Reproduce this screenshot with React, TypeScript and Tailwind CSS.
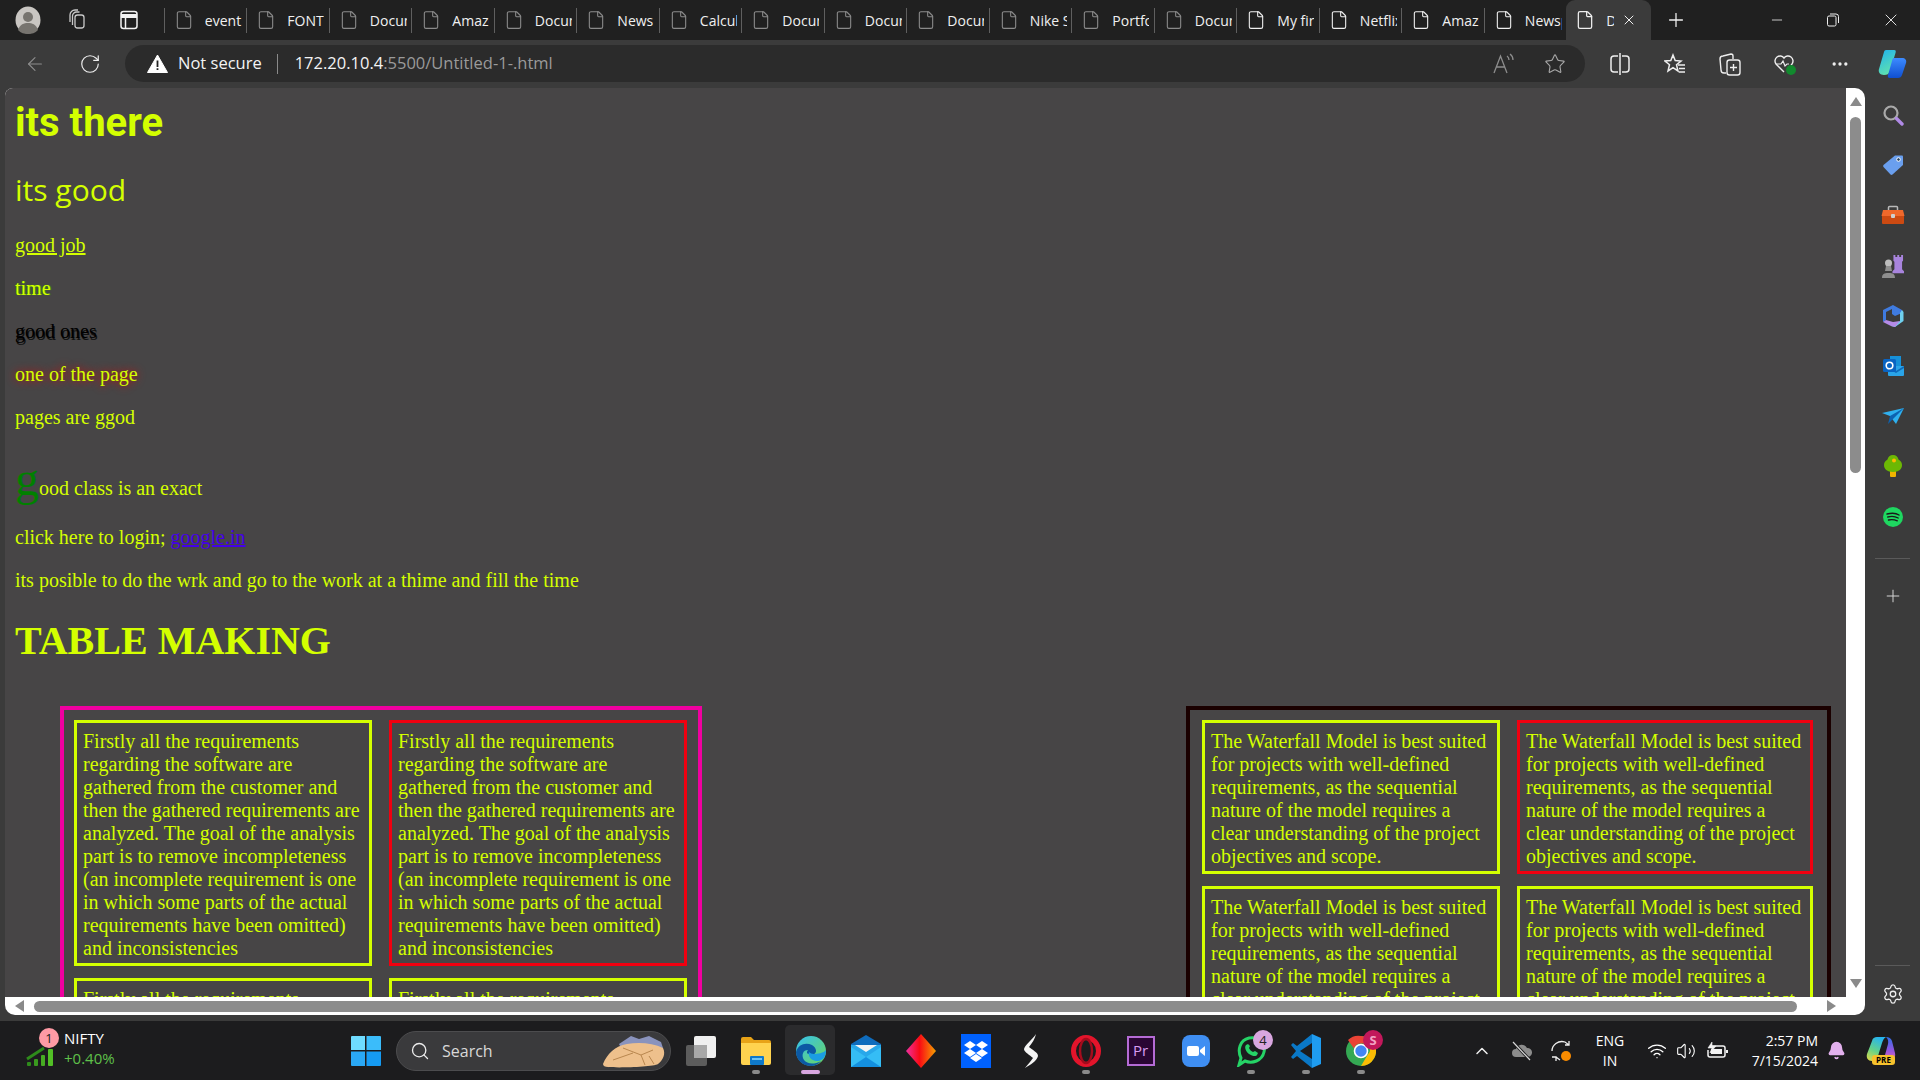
import React from 'react';
import {
  ArrowLeft,
  Bell,
  ChevronUp,
  File,
  Minus,
  MoreHorizontal,
  Plus,
  RotateCw,
  Search,
  Settings,
  Star,
  Volume2,
  Wifi,
  X,
} from 'lucide-react';

const uiFont = 'font-["Open_Sans",sans-serif]';

const tabs = [
  { title: 'event', dim: true },
  { title: 'FONT', dim: true },
  { title: 'Document', dim: true },
  { title: 'Amazon', dim: true },
  { title: 'Document', dim: true },
  { title: 'News', dim: true },
  { title: 'Calculator', dim: true },
  { title: 'Document', dim: true },
  { title: 'Document', dim: true },
  { title: 'Document', dim: true },
  { title: 'Nike Shoes', dim: true },
  { title: 'Portfolio', dim: true },
  { title: 'Document', dim: true },
  { title: 'My first page', dim: false },
  { title: 'Netflix', dim: false },
  { title: 'Amazon', dim: false },
  { title: 'Newspaper', dim: false },
];

const requirements =
  'Firstly all the requirements regarding the software are gathered from the customer and then the gathered requirements are analyzed. The goal of the analysis part is to remove incompleteness (an incomplete requirement is one in which some parts of the actual requirements have been omitted) and inconsistencies';

const waterfall =
  'The Waterfall Model is best suited for projects with well-defined requirements, as the sequential nature of the model requires a clear understanding of the project objectives and scope.';

const Avatar = () => (
  <svg width="26" height="28" viewBox="0 0 26 28">
    <ellipse cx="13" cy="14" rx="12.5" ry="13.5" fill="#c9c6c2" />
    <circle cx="13" cy="11" r="5" fill="#77746f" />
    <path d="M3 24c2-6 6-7 10-7s8 1 10 7c-3 3-6 4-10 4s-7-1-10-4z" fill="#77746f" />
  </svg>
);

const Workspaces = () => (
  <svg width="20" height="22" viewBox="0 0 20 22" fill="none" stroke="#c8c8c8" strokeWidth="1.3">
    <rect x="8" y="6" width="9" height="13" rx="2.5" />
    <path d="M5.5 16V7a4 4 0 0 1 4-4h3" />
    <path d="M3 13V6a5 5 0 0 1 5-5h3" />
  </svg>
);

const TabsIcon = () => (
  <svg width="18" height="20" viewBox="0 0 18 20" fill="none" stroke="#f2f2f2" strokeWidth="1.5">
    <rect x="1" y="1.5" width="16" height="17" rx="2.5" />
    <path d="M1 6h16" strokeWidth="4" />
    <path d="M5.5 7v11" />
  </svg>
);

const Warning = () => (
  <svg width="21" height="19" viewBox="0 0 21 19">
    <path d="M10.5 1 20.5 18.5H.5z" fill="#fff" stroke="#fff" strokeLinejoin="round" />
    <path d="M9.6 6.5h1.8v6.5H9.6zM9.6 14.2h1.8V16H9.6z" fill="#222" />
  </svg>
);

const ReadAloud = () => (
  <svg width="24" height="22" viewBox="0 0 24 22" fill="none" stroke="#8d8d8d" strokeWidth="1.3">
    <path d="M2 20 8.5 3 15 20M4.5 14h8" />
    <path d="M15 3c1.500 1 2 2.500 2 4M18 1c2 1.500 3 3.500 3 6" />
  </svg>
);

const SplitScreen = () => (
  <svg width="22" height="24" viewBox="0 0 22 24" fill="none" stroke="#eee" strokeWidth="1.5">
    <path d="M9 4H5a3 3 0 0 0-3 3v10a3 3 0 0 0 3 3h4" />
    <path d="M13 4h4a3 3 0 0 1 3 3v10a3 3 0 0 1-3 3h-4" />
    <path d="M11 1v22" />
  </svg>
);

const Favorites = () => (
  <svg width="22" height="22" viewBox="0 0 22 22" fill="none" stroke="#eee" strokeWidth="1.5">
    <path d="M9 2 11.200 7.600 17 8l-4.500 3.700L14 18l-5-3.300L4 18l1.500-6.300L1 8l5.800-.4z" />
    <path d="M14 12h7M15 15.500h6M15 19h6" />
  </svg>
);

const Collections = () => (
  <svg width="24" height="24" viewBox="0 0 24 24" fill="none" stroke="#eee" strokeWidth="1.4">
    <path d="M8 21H6a3 3 0 0 1-3-3L2 7a3 3 0 0 1 3-3l8-2a2 2 0 0 1 2 2v3" />
    <rect x="9" y="8" width="13" height="15" rx="2.5" />
    <path d="M15.500 12v7M12 15.500h7" />
  </svg>
);

const HeartPulse = () => (
  <svg width="24" height="24" viewBox="0 0 24 24" fill="none">
    <path d="M11 20 3 12a5 5 0 0 1 8-6 5 5 0 0 1 8 6l-1 1" stroke="#eee" strokeWidth="1.4" />
    <path d="M3 12h5l2-3 2 5 2-2h2" stroke="#eee" strokeWidth="1.2" />
    <circle cx="18" cy="18" r="5" fill="#128a2e" />
  </svg>
);

const CopilotMark = ({ size = 30 }: { size?: number }) => (
  <svg width={size} height={size} viewBox="0 0 30 30">
    <defs>
      <linearGradient id="cp1" x1="0" y1="0" x2="0.4" y2="1">
        <stop offset="0" stopColor="#1fb2ef" />
        <stop offset="1" stopColor="#5ee0b0" />
      </linearGradient>
      <linearGradient id="cp2" x1="0" y1="0" x2="0" y2="1">
        <stop offset="0" stopColor="#3d8bff" />
        <stop offset="1" stopColor="#0f4fd0" />
      </linearGradient>
    </defs>
    <path d="M9 1h8c2 0 2 1 1.500 3L13 22c-1 3-3 4-6 4-4 0-6-3-5-6L7 3c.3-1.300 1-2 2-2z" fill="url(#cp1)" />
    <path d="M17 9h8c3 0 5 2 4 5l-4 12c-.6 2-2 3-4 3h-8c-2 0-2.500-1-2-3l4-14c.4-2 1-3 2-3z" fill="url(#cp2)" />
  </svg>
);

const SideIcon = ({ name }: { name: string }) => {
  if (name === 'search')
    return (
      <svg width="22" height="22" viewBox="0 0 22 22" fill="none">
        <circle cx="9" cy="9" r="6.500" stroke="#a9a9a9" strokeWidth="2.200" />
        <path d="M14.500 14.500 20 20" stroke="#b08ae6" strokeWidth="3.400" strokeLinecap="round" />
      </svg>
    );
  if (name === 'tag')
    return (
      <svg width="22" height="22" viewBox="0 0 22 22">
        <path d="M13 1.500h7a1 1 0 0 1 1 1V11L10.500 20.500a1.500 1.500 0 0 1-2 0L1.500 13a1.500 1.500 0 0 1 0-2z" fill="#6a9fee" />
        <circle cx="16.500" cy="5.500" r="1.800" fill="#24415f" stroke="#fff" />
      </svg>
    );
  if (name === 'toolbox')
    return (
      <svg width="24" height="20" viewBox="0 0 24 20">
        <path d="M7.500 5V2.500a1 1 0 0 1 1-1h7a1 1 0 0 1 1 1V5" fill="none" stroke="#b9b9b9" strokeWidth="1.500" />
        <path d="M2 5h20l1.500 6H.5z" fill="#f0682b" />
        <path d="M1 11h22v7a1 1 0 0 1-1 1H2a1 1 0 0 1-1-1z" fill="#cc4a12" />
        <rect x="10" y="9" width="4" height="4" rx="1" fill="#cfcfcf" />
      </svg>
    );
  if (name === 'chess')
    return (
      <svg width="24" height="24" viewBox="0 0 24 24">
        <path d="M14 1h2v2h2V1h2v2h2V1h2v6l-1 1v8l2 2v2H13v-2l2-2V8l-1-1z" fill="#a884dd" transform="translate(-1 0) scale(.96)" />
        <circle cx="7.500" cy="9" r="3.500" fill="#bdbdbd" />
        <path d="M5 12h5l1 5H4zM1 24c0-4 2-5 6.500-5S14 20 14 24z" fill="#8e8e8e" />
      </svg>
    );
  if (name === 'office')
    return (
      <svg width="22" height="24" viewBox="0 0 22 24">
        <path d="M11 1 20 6v3l-7 3-3-2V5L4 8v8L1 18V6z" fill="#3f7be0" />
        <path d="M20 6l1.500 2v9L13 23l-4-1 9-5V9z" fill="#6fd0ee" />
        <path d="M1 18l8 4 4 1 5-6-7 1-7-2z" fill="#b48be8" />
      </svg>
    );
  if (name === 'outlook')
    return (
      <svg width="22" height="22" viewBox="0 0 22 22">
        <rect x="8" y="1" width="11" height="10" fill="#1690d8" />
        <path d="M6 11h16v9a1 1 0 0 1-1 1H7a1 1 0 0 1-1-1z" fill="#2aa4e8" />
        <path d="M6 11l8 5 8-5v2l-8 5-8-5z" fill="#0f6ab8" />
        <rect x="1" y="4" width="13" height="13" rx="1.500" fill="#0a64c2" />
        <circle cx="7.500" cy="10.500" r="3.300" fill="none" stroke="#fff" strokeWidth="1.600" />
      </svg>
    );
  if (name === 'send')
    return (
      <svg width="24" height="18" viewBox="0 0 24 18">
        <path d="M1 6 23 1 15 17 9 9z" fill="#2fb0ee" />
        <path d="M9 9 23 1 7 17z" fill="#0d62b0" />
      </svg>
    );
  if (name === 'tree')
    return (
      <svg width="20" height="24" viewBox="0 0 20 24">
        <rect x="7" y="16" width="6" height="7" rx="1" fill="#f0b400" />
        <path d="M10 1c3 0 5 2 5.500 4.500C18 7 19 9 19 11c0 4-3 7-9 7s-9-3-9-7c0-2 1-4 3.500-5.500C5 3 7 1 10 1z" fill="#6cb804" />
        <circle cx="11" cy="6.500" r="2" fill="#ffb900" />
      </svg>
    );
  return (
    <svg width="20" height="20" viewBox="0 0 20 20" fill="none">
      <circle cx="10" cy="10" r="10" fill="#1ed760" />
      <path d="M4 7c4-1 9-1 12 1M4.800 10c3.500-1 7.500-.6 10.400 1M5.500 13c3-.7 6-.4 8.800.8" stroke="#1a1a1a" strokeWidth="1.400" strokeLinecap="round" />
    </svg>
  );
};

const NiftyChart = () => (
  <svg width="30" height="20" viewBox="0 0 30 20">
    <path d="M1 13 18 2" stroke="#2e8b1b" strokeWidth="3" />
    <rect x="1" y="16" width="4" height="4" rx="1" fill="#2e8b1b" />
    <rect x="8" y="13" width="4" height="7" rx="1" fill="#3a9a1f" />
    <rect x="15" y="9" width="4" height="11" rx="1" fill="#46ab22" />
    <rect x="22" y="3" width="5" height="17" rx="1" fill="#52c026" />
  </svg>
);

const WindowsLogo = () => (
  <svg width="30" height="30" viewBox="0 0 30 30">
    <path d="M0 1a1 1 0 0 1 1-1h13v14H0z" fill="#6fdcff" />
    <path d="M15.500 0H29a1 1 0 0 1 1 1v13H15.500z" fill="#3bbcfa" />
    <path d="M0 15.500h14V30H1a1 1 0 0 1-1-1z" fill="#2aa8f5" />
    <path d="M15.500 15.500H30V29a1 1 0 0 1-1 1H15.500z" fill="#159bf3" />
  </svg>
);

const SearchArt = () => (
  <svg width="66" height="34" viewBox="0 0 66 34">
    <path d="M18 10 30 2l8 3 10-3 12 6 2 6H20z" fill="#8a93bd" />
    <path d="M2 30C6 20 14 12 26 10c12-2 26-1 36 4 3 6 0 12-5 16-5 3-40 4-50 3-3 0-5-1-5-3z" fill="#eec08c" />
    <path d="M22 14 40 21M40 21l12-5M40 21l4 10M48 22l5 8M12 26l20-7" stroke="#b9874f" strokeWidth="1" fill="none" />
  </svg>
);

const TaskView = () => (
  <svg width="30" height="30" viewBox="0 0 30 30">
    <rect x="0" y="9" width="21" height="21" rx="2" fill="#5c5c5c" />
    <rect x="8" y="0" width="22" height="22" rx="2" fill="#f0f0f0" />
    <rect x="8" y="9" width="13" height="13" fill="#a8a8a8" />
  </svg>
);

const Explorer = () => (
  <svg width="30" height="28" viewBox="0 0 30 28">
    <path d="M0 2a2 2 0 0 1 2-2h8l3 3h15a2 2 0 0 1 2 2v4H0z" fill="#e8a317" />
    <path d="M0 6h30v20a2 2 0 0 1-2 2H2a2 2 0 0 1-2-2z" fill="#ffd34f" />
    <rect x="9" y="19" width="14" height="9" rx="1" fill="#0f79c9" />
    <rect x="11" y="21" width="10" height="2" fill="#6dc4f5" />
  </svg>
);

const Edge = () => (
  <svg width="30" height="30" viewBox="0 0 30 30">
    <defs>
      <linearGradient id="edge1" x1="0" y1="0" x2="1" y2="1">
        <stop offset="0" stopColor="#35c1f1" />
        <stop offset="1" stopColor="#6bd65a" />
      </linearGradient>
    </defs>
    <circle cx="15" cy="15" r="15" fill="url(#edge1)" />
    <path d="M0 16C2 8 10 6 16 9c5 3 5 8 2 9h-5c-3 0-2-3-1-4-5 0-7 5-4 10 3 4 10 5 17 1-3 4-7 5-10 5C7 30 0 24 0 16z" fill="#0c59a4" />
    <path d="M18 18c3 0 10-1 12-4 0 4-1 7-3 9-3 2-7 3-10 1-3-1-5-5-4-8 1 1 3 2 5 2z" fill="#1b9de2" />
  </svg>
);

const Mail = () => (
  <svg width="30" height="32" viewBox="0 0 30 32">
    <path d="M15 0 30 9v4H0V9z" fill="#0f6cbd" />
    <path d="M0 10h30v22H0z" fill="#28a8ea" />
    <path d="M4 10h22L15 17z" fill="#f4f4f4" />
    <path d="M0 12l15 10 15-10v20H0z" fill="#35bdf5" />
    <path d="M0 32 15 22l15 10z" fill="#1490df" />
  </svg>
);

const RedDiamond = () => (
  <svg width="30" height="34" viewBox="0 0 30 34">
    <defs>
      <linearGradient id="dia" x1="0" y1="0" x2="1" y2="0">
        <stop offset="0" stopColor="#f02fa0" />
        <stop offset=".45" stopColor="#fa0a14" />
        <stop offset="1" stopColor="#f5a000" />
      </linearGradient>
    </defs>
    <path d="M15 0 30 17 15 34 0 17z" fill="url(#dia)" />
  </svg>
);

const Dropbox = () => (
  <svg width="30" height="34" viewBox="0 0 30 34">
    <rect width="30" height="34" fill="#0061fe" />
    <path d="m9 7 6 4-6 4-6-4zm12 0 6 4-6 4-6-4zM9 15l6 4-6 4-6-4zm12 0 6 4-6 4-6-4zM15 20l6 4-6 4-6-4z" fill="#fff" />
  </svg>
);

const Stylus = () => (
  <svg width="16" height="34" viewBox="0 0 16 34">
    <path d="M13 0C9 6 2 11 1 15c0 3 6 6 9 9-2 3-5 6-8 10 5-3 12-7 13-12 0-4-6-6-9-9 3-4 6-8 7-13z" fill="#f4f4f4" />
  </svg>
);

const Opera = () => (
  <svg width="30" height="32" viewBox="0 0 30 32">
    <ellipse cx="15" cy="16" rx="12.500" ry="13.500" fill="none" stroke="#e3142b" strokeWidth="5" />
    <ellipse cx="15" cy="16" rx="6" ry="12" fill="none" stroke="#a50b1c" strokeWidth="2.500" />
  </svg>
);

const Premiere = () => (
  <div className="w-[28px] h-[30px] bg-[#2a0634] border-2 border-[#b56bd6] flex items-center justify-center text-[#d99cf2] text-[15px] font-['Open_Sans',sans-serif]">
    Pr
  </div>
);

const Zoom = () => (
  <svg width="28" height="32" viewBox="0 0 28 32">
    <rect width="28" height="32" rx="8" fill="#3f8ef2" />
    <rect x="5" y="11" width="12" height="10" rx="2" fill="#fff" />
    <path d="m18 15 5-4v10l-5-4z" fill="#fff" />
  </svg>
);

const WhatsApp = () => (
  <svg width="30" height="32" viewBox="0 0 30 32" fill="none">
    <path d="M3 30 5 23C1 15 4 5 13 3c10-2 17 6 15 14-2 9-12 12-19 9z" stroke="#25d366" strokeWidth="3" />
    <path d="M10 10c-2 2 0 7 3 9s7 3 8 1l1-2-3-2-2 1c-2-1-3-2-4-4l1-2-2-2z" fill="#25d366" />
  </svg>
);

const VsCode = () => (
  <svg width="30" height="34" viewBox="0 0 30 34">
    <path d="M21 0 30 4v26l-9 4z" fill="#1f9cf0" />
    <path d="M21 0v9L9 17l12 8v9L6 22l-4 3-2-2 5-6-5-6 2-2 4 3z" fill="#0a78c7" />
  </svg>
);

const Chrome = () => (
  <svg width="30" height="32" viewBox="0 0 30 30">
    <circle cx="15" cy="15" r="15" fill="#34a853" />
    <path d="M15 0a15 15 0 0 1 13 7.500H15a7.500 7.500 0 0 0-7 5L2 4a15 15 0 0 1 13-4z" fill="#ea4335" />
    <path d="M28 7.500A15 15 0 0 1 15 30l6.500-11a7.500 7.500 0 0 0 0-11.500z" fill="#fbbc04" />
    <circle cx="15" cy="15" r="6.500" fill="#4285f4" stroke="#fff" strokeWidth="1.600" />
  </svg>
);

const Cloud = () => (
  <svg width="22" height="20" viewBox="0 0 22 20" fill="none">
    <path d="M5 16a4 4 0 0 1 0-8 6 6 0 0 1 11-1 4.500 4.500 0 0 1 1 9z" fill="#8c8c8c" />
    <path d="M2 1 19 19" stroke="#1c1c1e" strokeWidth="3" />
    <path d="M2 1 19 19" stroke="#d8d8d8" strokeWidth="1.200" />
  </svg>
);

const SyncBadge = () => (
  <svg width="22" height="22" viewBox="0 0 22 22" fill="none">
    <path d="M1 11C1 5 7 0 14 2l4 3M18 1v4h-4M9 20 5 17M1 17h4v4" stroke="#eee" strokeWidth="1.300" />
    <circle cx="15" cy="16" r="5" fill="#fb8c00" />
  </svg>
);

const Battery = () => (
  <svg width="22" height="20" viewBox="0 0 22 20" fill="none" stroke="#f2f2f2" strokeWidth="1.500">
    <path d="M6 5h11a2 2 0 0 1 2 2v7a2 2 0 0 1-2 2H4a2 2 0 0 1-2-2V9" />
    <path d="M21 9v3" strokeWidth="2" />
    <path d="M6 1 2 7h4l-2 5 6-7H6z" fill="#f2f2f2" strokeWidth="0.600" />
    <rect x="5" y="8" width="11" height="5" fill="#f2f2f2" stroke="none" />
  </svg>
);

const CopilotPre = () => (
  <div className="relative w-[30px] h-[30px]">
    <svg width="30" height="26" viewBox="0 0 30 26">
      <defs>
        <linearGradient id="pre1" x1="0.6" y1="0" x2="0.2" y2="1">
          <stop offset="0" stopColor="#26b4f0" />
          <stop offset=".55" stopColor="#63d28a" />
          <stop offset="1" stopColor="#d8d94a" />
        </linearGradient>
        <linearGradient id="pre2" x1="0.5" y1="0" x2="0.5" y2="1">
          <stop offset="0" stopColor="#2f6fe8" />
          <stop offset=".6" stopColor="#9a55dc" />
          <stop offset="1" stopColor="#e76ab8" />
        </linearGradient>
      </defs>
      <path d="M11 1h9c-2 1-3 3-4 6l-4 13c-1 3-3 5-6 5-4 0-6-3-5-7L6 5c.7-3 2.500-4 5-4z" fill="url(#pre1)" />
      <path d="M20 1c3 0 5 1.500 6 4l3 12c.8 4-1 7-4 8h-10c2-1 3-3 4-6l3-11c.4-2 .5-5-2-7z" fill="url(#pre2)" />
    </svg>
    <div className="absolute left-[6px] top-[19px] w-[23px] h-[10px] rounded-[3px] bg-[#f6c12d] text-black text-[8px] leading-[10px] font-bold text-center font-['Open_Sans',sans-serif]">
      PRE
    </div>
  </div>
);

const Cell = ({ text, red }: { text: string; red?: boolean }) => (
  <div className={`border-[3px] px-[6px] pt-[7px] pb-[3px] ${red ? 'border-[#f00010]' : 'border-[#d4ff00]'}`}>{text}</div>
);

const TabBar = () => (
  <div className={`h-[40px] flex items-center bg-[#202020] text-[#f0f0f0] ${uiFont}`}>
    <div className="w-[56px] flex justify-center"><Avatar /></div>
    <div className="w-[42px] flex justify-center"><Workspaces /></div>
    <div className="w-[42px] ml-[10px] flex justify-center"><TabsIcon /></div>
    <div className="ml-[14px] flex items-center">
      {tabs.map((tab, i) => (
        <div key={i} className="w-[82.5px] h-[25px] flex items-center border-l border-[#5f5f5f] pl-[9px]">
          <File size={20} strokeWidth={1.3} className={tab.dim ? 'text-[#8a8a8a]' : 'text-[#f0f0f0]'} />
          <span className="ml-[11px] w-[37px] overflow-hidden whitespace-nowrap text-[14px]">{tab.title}</span>
        </div>
      ))}
    </div>
    <div className="w-[85px] h-[40px] bg-[#3b3b3b] rounded-t-[9px] flex items-center pl-[9px]">
      <File size={20} strokeWidth={1.5} />
      <span className="ml-[11px] w-[8px] overflow-hidden text-[14px]">Document</span>
      <X size={16} className="ml-[7px]" strokeWidth={1.5} />
    </div>
    <div className="w-[50px] flex justify-center"><Plus size={22} strokeWidth={1.4} /></div>
    <div className="w-[55px] ml-[48px] flex justify-center"><Minus size={16} strokeWidth={1.2} /></div>
    <div className="w-[58px] flex justify-center">
      <svg width="14" height="14" viewBox="0 0 14 14" fill="none" stroke="#eee">
        <rect x="1.500" y="3" width="8.500" height="10" rx="1.500" />
        <path d="M4 1h6a2.500 2.500 0 0 1 2.500 2.500V10" />
      </svg>
    </div>
    <div className="w-[58px] flex justify-center"><X size={20} strokeWidth={1.1} /></div>
  </div>
);

const ToolBar = () => (
  <div className={`h-[48px] flex items-center bg-[#3b3b3b] pb-[1px] ${uiFont}`}>
    <div className="w-[54px] ml-[8px] flex justify-center"><ArrowLeft size={22} strokeWidth={1.2} className="text-[#8e8e8e]" /></div>
    <div className="w-[54px] ml-[1px] flex justify-center"><RotateCw size={22} strokeWidth={1.3} className="text-[#eee]" /></div>
    <div className="ml-[8px] w-[1460px] h-[37px] rounded-full bg-[#2b2b2b] flex items-center pl-[22px] text-[16.5px]">
      <Warning />
      <span className="ml-[10px] text-[#f4f4f4] whitespace-nowrap">Not secure</span>
      <span className="ml-[15px] w-px h-[20px] bg-[#8a8a8a]" />
      <span className="ml-[17px] text-[#f4f4f4] whitespace-nowrap">
        172.20.10.4<span className="text-[#9a9a9a]">:5500/Untitled-1-.html</span>
      </span>
      <div className="ml-auto flex items-center mr-[19px] gap-[28px]">
        <ReadAloud />
        <Star size={22} strokeWidth={1.2} className="text-[#a8a8a8]" />
      </div>
    </div>
    <div className="w-[55px] ml-[7px] flex justify-center"><SplitScreen /></div>
    <div className="w-[55px] flex justify-center"><Favorites /></div>
    <div className="w-[55px] flex justify-center"><Collections /></div>
    <div className="w-[55px] flex justify-center"><HeartPulse /></div>
    <div className="w-[55px] flex justify-center"><MoreHorizontal size={20} className="text-[#eee]" /></div>
    <div className="w-[50px] flex justify-center"><CopilotMark /></div>
  </div>
);

const PageContent = () => (
  <div className="flex-1 min-w-0 overflow-hidden bg-[#474546] pl-[10px] pt-[11px] text-[20px] leading-[23px] text-[#d4ff00] font-['Liberation_Serif',serif]">
    <h1 className="text-[40px] leading-[47px] font-bold font-['Roboto',sans-serif]">its there</h1>
    <h2 className="mt-[23px] text-[30px] leading-[41px] font-['Open_Sans',sans-serif]">its good</h2>
    <p className="mt-[24px] underline">good job</p>
    <p className="mt-[20px] [text-shadow:1px_0_1px_#3fae00]">time</p>
    <p className="mt-[20px] text-black [text-shadow:1px_2px_0_#111]">good ones</p>
    <p className="mt-[20px] [text-shadow:0_0_8px_#e00000]">one of the page</p>
    <p className="mt-[20px]">pages are ggod</p>
    <p className="mt-[22px] leading-[55px]">
      <span className="text-[48px] text-[#008000]">g</span>ood class is an exact
    </p>
    <p className="mt-[10px]">
      click here to login; <a className="text-[#4400e8] underline">google.in</a>
    </p>
    <p className="mt-[20px]">its posible to do the wrk and go to the work at a thime and fill the time</p>
    <h1 className="mt-[26px] text-[40px] leading-[46px] font-bold">TABLE MAKING</h1>
    <div className="mt-[42px] flex items-start justify-between pl-[45px] pr-[15px]">
      <div className="w-[642px] border-4 border-[#f000a0] p-[10px] grid grid-cols-[298px_298px] gap-x-[17px] gap-y-[12px]">
        <Cell text={requirements} />
        <Cell text={requirements} red />
        <Cell text={requirements} />
        <Cell text={requirements} />
      </div>
      <div className="w-[645px] border-4 border-[#1a0000] pl-[12px] pt-[10px] grid grid-cols-[298px_296px] gap-x-[17px] gap-y-[12px]">
        <Cell text={waterfall} />
        <Cell text={waterfall} red />
        <Cell text={waterfall} />
        <Cell text={waterfall} />
      </div>
    </div>
  </div>
);

const Browser = () => (
  <div className="h-[933px] flex bg-[#3b3b3b]">
    <div className="ml-[5px] w-[1860px] h-[927px] flex flex-col overflow-hidden bg-white rounded-tl-[8px] rounded-tr-[10px] rounded-bl-[10px] rounded-br-[10px]">
      <div className="h-[909px] flex min-h-0">
        <PageContent />
        <div className="w-[19px] flex flex-col items-center pt-[9px] pb-[9px]">
          <div className="w-0 h-0 border-x-[6px] border-x-transparent border-b-[9px] border-b-[#8a8a8a]" />
          <div className="mt-[11px] w-[11px] h-[356px] rounded-full bg-[#8c8c8c]" />
          <div className="mt-auto w-0 h-0 border-x-[6px] border-x-transparent border-t-[9px] border-t-[#8a8a8a]" />
        </div>
      </div>
      <div className="h-[18px] flex items-center pl-[10px]">
        <div className="w-0 h-0 border-y-[6px] border-y-transparent border-r-[9px] border-r-[#8a8a8a]" />
        <div className="ml-[10px] w-[1763px] h-[11px] rounded-full bg-[#8c8c8c]" />
        <div className="ml-[30px] w-0 h-0 border-y-[6px] border-y-transparent border-l-[9px] border-l-[#8a8a8a]" />
      </div>
    </div>
    <div className="w-[55px] flex flex-col items-center pt-[2px] pb-[16px]">
      {['search', 'tag', 'toolbox', 'chess', 'office', 'outlook', 'send', 'tree', 'spotify'].map((name) => (
        <div key={name} className="h-[50.2px] w-full flex items-center justify-center"><SideIcon name={name} /></div>
      ))}
      <div className="mt-[16px] w-[35px] h-px bg-[#5a5a5a]" />
      <Plus size={20} strokeWidth={1.2} className="mt-[27px] text-[#d4d4d4]" />
      <div className="mt-auto w-[35px] h-px bg-[#5a5a5a]" />
      <Settings size={22} strokeWidth={1.4} className="mt-[17px] text-[#eee]" />
    </div>
  </div>
);

const AppSlot = ({ children, dot, badge, badgeClass }: { children: React.ReactNode; dot?: boolean; badge?: string; badgeClass?: string }) => (
  <div className="relative w-[55px] h-[59px] flex items-center justify-center">
    {children}
    {badge && (
      <div className={`absolute left-[30px] top-[9px] w-[20px] h-[20px] rounded-full text-[13px] leading-[20px] text-center ${badgeClass}`}>{badge}</div>
    )}
    {dot && <div className="absolute left-[24px] bottom-[6px] w-[8px] h-[4px] rounded-full bg-[#8a8a8a]" />}
  </div>
);

const TaskBar = () => (
  <div className={`h-[59px] flex items-center bg-[#1c1c1e] text-white ${uiFont}`}>
    <div className="relative w-[338px] h-full">
      <div className="absolute left-[26px] top-[25px]"><NiftyChart /></div>
      <div className="absolute left-[39px] top-[7px] w-[20px] h-[20px] rounded-full bg-[#ff9aa5] text-[#222] text-[13px] leading-[20px] text-center">1</div>
      <div className="absolute left-[64px] top-[8px] text-[15px] leading-[19px]">NIFTY</div>
      <div className="absolute left-[64px] top-[28px] text-[15px] leading-[19px] text-[#5fc04a]">+0.40%</div>
    </div>
    <div className="w-[55px] flex justify-center"><WindowsLogo /></div>
    <div className="ml-[3px] w-[275px] h-[40px] rounded-full bg-[#3a3a3c] border border-[#4c4c4e] flex items-center pl-[13px] pr-[3px]">
      <Search size={20} strokeWidth={1.6} className="text-[#ececec]" />
      <span className="ml-[12px] text-[16px] text-[#d8d8d8]">Search</span>
      <div className="ml-auto"><SearchArt /></div>
    </div>
    <div className="ml-[2px] flex items-center">
      <AppSlot><TaskView /></AppSlot>
      <AppSlot dot><Explorer /></AppSlot>
      <div className="relative w-[55px] h-[59px] flex items-center justify-center">
        <div className="absolute left-[2px] top-[4px] w-[50px] h-[50px] rounded-[5px] bg-[#2b2b2d]" />
        <div className="relative"><Edge /></div>
        <div className="absolute left-[18px] bottom-[6px] w-[19px] h-[4px] rounded-full bg-[#d8a6e0]" />
      </div>
      <AppSlot><Mail /></AppSlot>
      <AppSlot><RedDiamond /></AppSlot>
      <AppSlot><Dropbox /></AppSlot>
      <AppSlot><Stylus /></AppSlot>
      <AppSlot dot><Opera /></AppSlot>
      <AppSlot><Premiere /></AppSlot>
      <AppSlot><Zoom /></AppSlot>
      <AppSlot dot badge="4" badgeClass="bg-[#d8a6e0] text-[#222]"><WhatsApp /></AppSlot>
      <AppSlot dot><VsCode /></AppSlot>
      <AppSlot dot badge="S" badgeClass="bg-[#c2185b] text-[#f3a5c4] font-bold"><Chrome /></AppSlot>
    </div>
    <div className="ml-[74px] w-[40px] flex justify-center"><ChevronUp size={20} strokeWidth={1.8} className="text-[#eee]" /></div>
    <div className="w-[40px] flex justify-center"><Cloud /></div>
    <div className="w-[40px] flex justify-center"><SyncBadge /></div>
    <div className="w-[56px] text-center text-[14px] leading-[20px]">ENG<br />IN</div>
    <div className="w-[38px] flex justify-center"><Wifi size={20} strokeWidth={1.6} /></div>
    <div className="w-[20px] flex justify-center"><Volume2 size={20} strokeWidth={1.3} /></div>
    <div className="w-[42px] flex justify-center"><Battery /></div>
    <div className="w-[80px] text-right text-[14px] leading-[20px] whitespace-nowrap">2:57 PM<br />7/15/2024</div>
    <div className="w-[36px] flex justify-center"><Bell size={19} className="text-[#e3b1ee] fill-[#e3b1ee]" /></div>
    <div className="w-[54px] flex justify-center"><CopilotPre /></div>
  </div>
);

export default function App() {
  return (
    <div className="w-[1920px] h-[1080px] overflow-hidden flex flex-col">
      <TabBar />
      <ToolBar />
      <Browser />
      <TaskBar />
    </div>
  );
}
